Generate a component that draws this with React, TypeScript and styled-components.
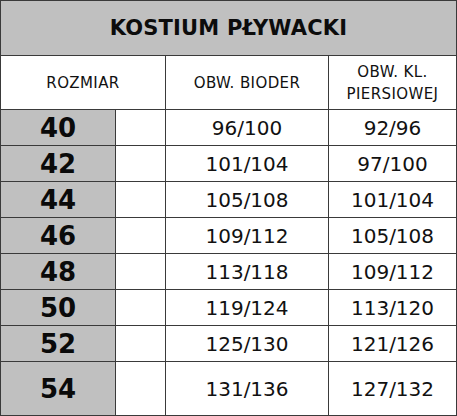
import React from 'react';
import styled, { createGlobalStyle } from 'styled-components';

const GlobalStyle = createGlobalStyle`
  html, body {
    margin: 0;
    padding: 0;
    background: #ffffff;
  }
  body {
    font-family: "DejaVu Sans", Verdana, sans-serif;
    color: #111111;
  }
`;

const Table = styled.table`
  width: 456px;
  border-collapse: collapse;
  table-layout: fixed;
  border: 1px solid #3a3a3a;
`;

const Cell = styled.td`
  border: 1px solid #3a3a3a;
  padding: 0;
  text-align: center;
  vertical-align: middle;
`;

const TitleCell = styled(Cell)`
  background: #c0c0c0;
  height: 54px;
  font-size: 21px;
  font-weight: bold;
  letter-spacing: 0.2px;
  color: #0c0c0c;
`;

const HeadCell = styled(Cell)`
  height: 53px;
  font-size: 15px;
  line-height: 22px;
  letter-spacing: 0.4px;
`;

const SizeCell = styled(Cell)<{ $tall?: boolean }>`
  background: #c0c0c0;
  height: ${(p) => (p.$tall ? '53px' : '35px')};
  font-size: 26px;
  font-weight: bold;
  color: #0a0a0a;
`;

const ValueCell = styled(Cell)`
  font-size: 20px;
`;

const rows = [
  ['40', '96/100', '92/96'],
  ['42', '101/104', '97/100'],
  ['44', '105/108', '101/104'],
  ['46', '109/112', '105/108'],
  ['48', '113/118', '109/112'],
  ['50', '119/124', '113/120'],
  ['52', '125/130', '121/126'],
  ['54', '131/136', '127/132'],
];

function App() {
  return (
    <>
      <GlobalStyle />
      <Table>
        <colgroup>
          <col style={{ width: 115 }} />
          <col style={{ width: 50 }} />
          <col style={{ width: 163 }} />
          <col style={{ width: 128 }} />
        </colgroup>
        <tbody>
          <tr>
            <TitleCell colSpan={4}>KOSTIUM PŁYWACKI</TitleCell>
          </tr>
          <tr>
            <HeadCell colSpan={2}>ROZMIAR</HeadCell>
            <HeadCell>OBW. BIODER</HeadCell>
            <HeadCell>
              OBW. KL.
              <br />
              PIERSIOWEJ
            </HeadCell>
          </tr>
          {rows.map(([size, hips, chest], i) => (
            <tr key={size}>
              <SizeCell $tall={i === rows.length - 1}>{size}</SizeCell>
              <Cell />
              <ValueCell>{hips}</ValueCell>
              <ValueCell>{chest}</ValueCell>
            </tr>
          ))}
        </tbody>
      </Table>
    </>
  );
}

export default App;
